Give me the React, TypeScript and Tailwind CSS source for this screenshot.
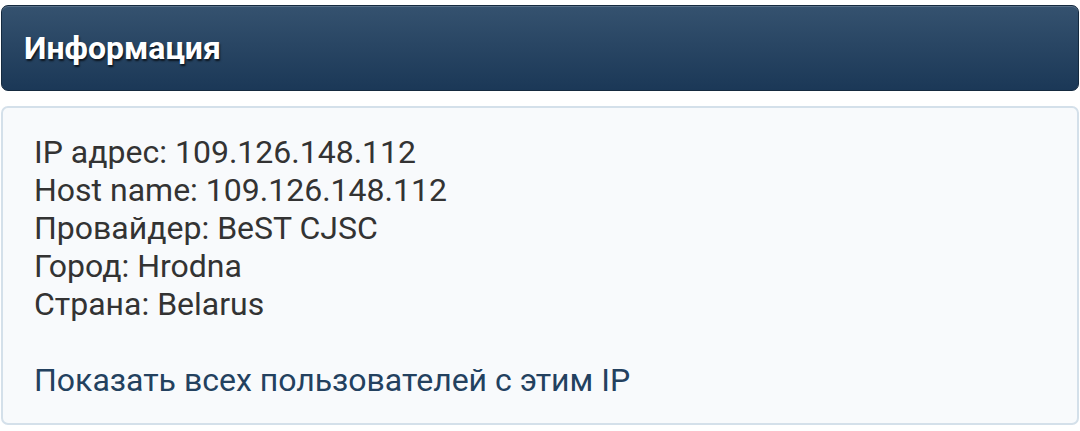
export default function App() {
  const rows = [
    ['IP адрес', '109.126.148.112'],
    ['Host name', '109.126.148.112'],
    ['Провайдер', 'BeST CJSC'],
    ['Город', 'Hrodna'],
    ['Страна', 'Belarus'],
  ];

  return (
    <div className="w-[1080px] h-[431px] bg-white font-['Roboto','Noto_Sans',sans-serif] pt-[5px] px-[1px]">
      {/* Block header */}
      <div className="h-[86px] rounded-[7px] border border-[#152a3f] bg-gradient-to-b from-[#35526f] to-[#1b3857] shadow-[inset_0_1px_0_rgba(255,255,255,0.18)] flex items-center px-[22px]">
        <h2 className="text-[32px] font-bold text-white [text-shadow:1px_2px_2px_rgba(0,0,0,0.7)] leading-none">
          Информация
        </h2>
      </div>

      {/* Block body */}
      <div className="mt-[15px] h-[319px] rounded-[7px] border-2 border-[#d4e0ea] bg-[#f8fafc] pt-[25px] px-[31px] text-[32px] leading-[38px] text-[#333333]">
        {rows.map(([label, value]) => (
          <div key={label}>
            {label}: {value}
          </div>
        ))}
        <div className="h-[38px]" />
        <a href="#" className="text-[#23415f]">
          Показать всех пользователей с этим IP
        </a>
      </div>
    </div>
  );
}
